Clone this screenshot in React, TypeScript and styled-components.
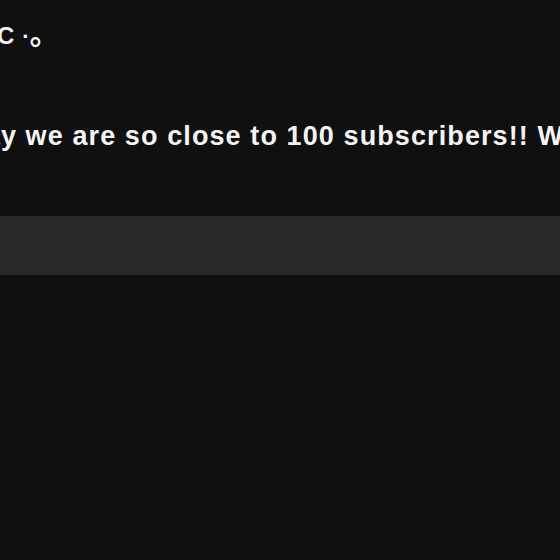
import React from "react";
import styled, { createGlobalStyle } from "styled-components";

const Global = createGlobalStyle`
  html, body {
    margin: 0;
    padding: 0;
    background: #101010;
    overflow: hidden;
  }
  body {
    width: 560px;
    height: 560px;
  }
`;

const Page = styled.div`
  width: 560px;
  height: 560px;
  background: #101010;
  display: flex;
  flex-direction: column;
  overflow: hidden;
  font-family: "Liberation Sans", Arial, sans-serif;
  color: #f4f4f4;
`;

const Title = styled.div`
  margin-top: 21px;
  margin-left: -3px;
  height: 30px;
  font-size: 24px;
  font-weight: 700;
  line-height: 30px;
  white-space: nowrap;
`;

const MiddleDot = styled.span`
  font-weight: 700;
  font-size: 22px;
  line-height: 0;
  margin-left: 8px;
`;

const Circle = styled.span`
  font-family: "Noto Sans CJK JP", sans-serif;
  font-weight: 700;
  font-size: 30px;
  line-height: 0;
  margin-left: 0px;
`;

const Message = styled.div`
  margin-top: 69px;
  margin-left: -66px;
  height: 32px;
  font-size: 27px;
  font-weight: 700;
  line-height: 32px;
  letter-spacing: 1.1px;
  white-space: nowrap;
`;

const Composer = styled.div`
  margin-top: 64px;
  height: 58px;
  background: #282828;
  border-bottom: 1px solid #2d2d2d;
`;

export default function App() {
  return (
    <>
      <Global />
      <Page>
        <Title>
          C<MiddleDot>·</MiddleDot>
          <Circle>｡</Circle>
        </Title>
        <Message>Today we are so close to 100 subscribers!! We can't wait</Message>
        <Composer />
      </Page>
    </>
  );
}
